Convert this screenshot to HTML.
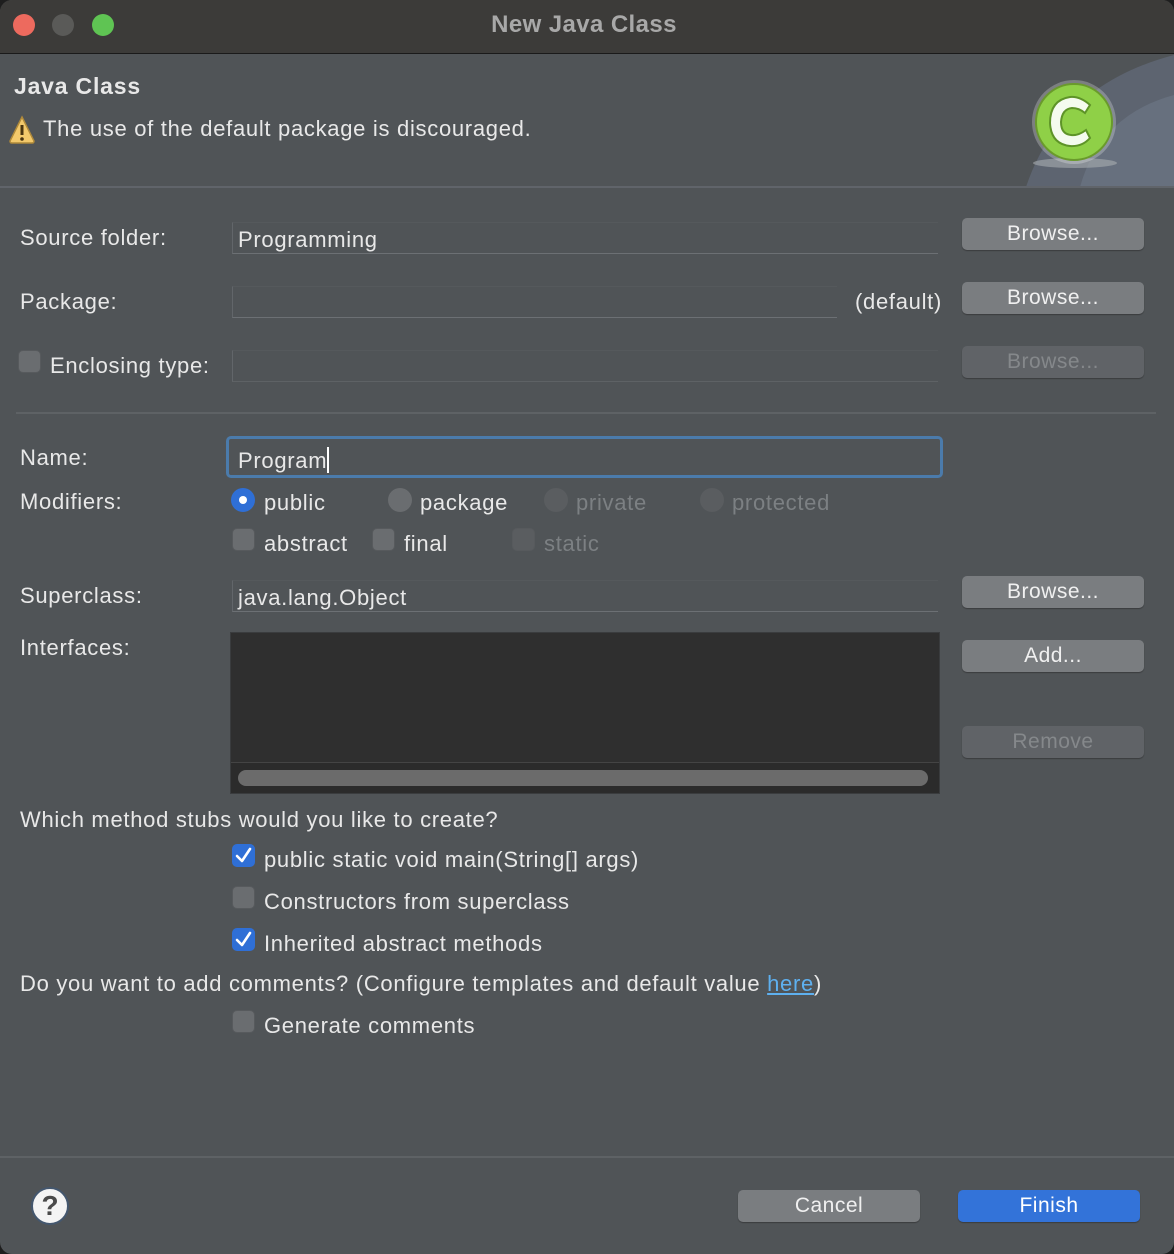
<!DOCTYPE html>
<html><head><meta charset="utf-8"><style>
*{margin:0;padding:0;box-sizing:border-box}
body{width:1174px;height:1254px;background:#1e1e1e;font-family:"Liberation Sans",sans-serif;overflow:hidden}
.win{position:absolute;left:0;top:0;width:1174px;height:1254px;background:#505457;border-radius:12px;overflow:hidden}
.tb{position:absolute;left:0;top:0;width:1174px;height:54px;background:#3c3b39;border-bottom:1px solid #1a1a1a}
.dot{position:absolute;top:14px;width:22px;height:22px;border-radius:50%}
.t{position:absolute;color:#e8e8e8;font-size:22px;letter-spacing:0.7px;white-space:nowrap;line-height:24px}
.dis{color:#7c8083}
.field{position:absolute;border-left:1px solid #62666a;border-bottom:1px solid #6c7074;border-top:1px solid #55595c}
.btn{position:absolute;height:32px;background:#7a7d80;border-radius:5px;color:#f0f0f0;font-size:21px;letter-spacing:0.5px;text-align:center;line-height:32px;box-shadow:0 1px 1px #3a3c3e}
.btn.d{background:#606367;color:#85888b}
.cb{position:absolute;width:23px;height:23px;border-radius:5px;background:#6a6d70;border:1px solid #575a5d}
.cb.d{background:#5a5d60}
.cb.on{background:#2f6fd6;border-color:#2f6fd6}
.rd{position:absolute;width:24px;height:24px;border-radius:50%;background:#6a6d70}
.rd.d{background:#5a5d60}
.hr{position:absolute;height:2px;background:#5e6265}
</style></head><body><div class="win">
<div class="tb">
<div class="dot" style="left:13px;background:#ed6a5e"></div>
<div class="dot" style="left:52px;background:#5a5a58"></div>
<div class="dot" style="left:92px;background:#5fc453"></div>
<div class="t" style="left:0;width:1168px;text-align:center;top:13px;font-weight:bold;color:#a8a8a8;font-size:24px;letter-spacing:0.4px">New Java Class</div>
</div>
<svg style="position:absolute;left:1020px;top:55px" width="154" height="132"><path d="M6 132 Q40 30 154 0 L154 132Z" fill="#5d6470"/><path d="M60 132 Q80 60 154 40 L154 132Z" fill="#67707e"/></svg>
<svg style="position:absolute;left:1028px;top:80px" width="94" height="90">
<ellipse cx="47" cy="83" rx="42" ry="5" fill="#a8adb0" opacity=".6"/>
<circle cx="46" cy="42" r="42" fill="#fff" opacity=".25"/>
<circle cx="46" cy="42" r="38" fill="#8fd047" stroke="#6a9a2c" stroke-width="2"/>
<path d="M62 25 Q52 16 42 17 Q22 20 22 43 Q23 64 42 66 Q54 67 62 58 L58 50 Q50 56 43 55 Q33 54 33 42 Q34 29 44 28 Q51 28 57 33Z" fill="#f4fbee" stroke="#5e9428" stroke-width="2"/>
</svg>
<div class="t" style="left:14px;top:74px;font-weight:bold;font-size:23px;letter-spacing:0.8px">Java Class</div>
<svg style="position:absolute;left:8px;top:115px" width="28" height="30"><path d="M14 2 L26 26 Q26 28 24 28 L4 28 Q2 28 2 26Z" fill="#f3c96b" stroke="#b08a3a" stroke-width="1.5"/><rect x="12.5" y="10" width="3" height="10" fill="#4a3510"/><circle cx="14" cy="24" r="1.8" fill="#4a3510"/></svg>
<div class="t" style="left:43px;top:117px">The use of the default package is discouraged.</div>
<div class="hr" style="left:0;top:186px;width:1174px;background:#60646a"></div>

<div class="t" style="left:20px;top:226px">Source folder:</div>
<div class="field" style="left:232px;top:222px;width:706px;height:32px"></div>
<div class="t" style="left:238px;top:228px">Programming</div>
<div class="btn" style="left:962px;top:218px;width:182px">Browse...</div>

<div class="t" style="left:20px;top:290px">Package:</div>
<div class="field" style="left:232px;top:286px;width:605px;height:32px"></div>
<div class="t" style="left:855px;top:290px">(default)</div>
<div class="btn" style="left:962px;top:282px;width:182px">Browse...</div>

<div class="cb" style="left:18px;top:350px"></div>
<div class="t" style="left:50px;top:354px">Enclosing type:</div>
<div class="field" style="left:232px;top:350px;width:706px;height:32px;border-bottom-color:#5e6265"></div>
<div class="btn d" style="left:962px;top:346px;width:182px">Browse...</div>

<div class="hr" style="left:16px;top:412px;width:1140px"></div>

<div class="t" style="left:20px;top:446px">Name:</div>
<div style="position:absolute;left:226px;top:436px;width:717px;height:42px;border:3px solid #4b7bab;border-radius:5px;background:#505457"></div>
<div class="t" style="left:238px;top:447px">Program<span style="display:inline-block;width:2px;height:26px;background:#fff;vertical-align:-5px"></span></div>

<div class="t" style="left:20px;top:490px">Modifiers:</div>
<div class="rd" style="left:231px;top:488px;background:#2f6fd6"><div style="position:absolute;left:8px;top:8px;width:8px;height:8px;border-radius:50%;background:#fff"></div></div>
<div class="t" style="left:264px;top:491px">public</div>
<div class="rd" style="left:388px;top:488px"></div>
<div class="t" style="left:420px;top:491px">package</div>
<div class="rd d" style="left:544px;top:488px"></div>
<div class="t dis" style="left:576px;top:491px">private</div>
<div class="rd d" style="left:700px;top:488px"></div>
<div class="t dis" style="left:732px;top:491px">protected</div>

<div class="cb" style="left:232px;top:528px"></div>
<div class="t" style="left:264px;top:532px">abstract</div>
<div class="cb" style="left:372px;top:528px"></div>
<div class="t" style="left:404px;top:532px">final</div>
<div class="cb d" style="left:512px;top:528px"></div>
<div class="t dis" style="left:544px;top:532px">static</div>

<div class="t" style="left:20px;top:584px">Superclass:</div>
<div class="field" style="left:232px;top:580px;width:706px;height:32px"></div>
<div class="t" style="left:238px;top:586px">java.lang.Object</div>
<div class="btn" style="left:962px;top:576px;width:182px">Browse...</div>

<div class="t" style="left:20px;top:636px">Interfaces:</div>
<div style="position:absolute;left:230px;top:632px;width:710px;height:162px;background:#2f2f2f;border:1px solid #3a3c3e"></div>
<div style="position:absolute;left:231px;top:762px;width:708px;height:31px;background:#2b2b2b;border-top:1px solid #444"></div>
<div style="position:absolute;left:238px;top:770px;width:690px;height:16px;border-radius:8px;background:#6b6b6b"></div>
<div class="btn" style="left:962px;top:640px;width:182px">Add...</div>
<div class="btn d" style="left:962px;top:726px;width:182px">Remove</div>

<div class="t" style="left:20px;top:808px">Which method stubs would you like to create?</div>
<div class="cb on" style="left:232px;top:844px"><svg width="21" height="21" style="position:absolute;left:0;top:0"><path d="M4 11 L9 16 L17 4" fill="none" stroke="#fff" stroke-width="2.6" stroke-linecap="round" stroke-linejoin="round"/></svg></div>
<div class="t" style="left:264px;top:848px">public static void main(String[] args)</div>
<div class="cb" style="left:232px;top:886px"></div>
<div class="t" style="left:264px;top:890px">Constructors from superclass</div>
<div class="cb on" style="left:232px;top:928px"><svg width="21" height="21" style="position:absolute;left:0;top:0"><path d="M4 11 L9 16 L17 4" fill="none" stroke="#fff" stroke-width="2.6" stroke-linecap="round" stroke-linejoin="round"/></svg></div>
<div class="t" style="left:264px;top:932px">Inherited abstract methods</div>

<div class="t" style="left:20px;top:972px">Do you want to add comments? (Configure templates and default value <span style="color:#5eb0ef;text-decoration:underline">here</span>)</div>
<div class="cb" style="left:232px;top:1010px"></div>
<div class="t" style="left:264px;top:1014px">Generate comments</div>

<div class="hr" style="left:0;top:1156px;width:1174px"></div>
<div style="position:absolute;left:31px;top:1187px;width:38px;height:38px;border-radius:50%;background:#f4f4f4;border:2px solid #44576e;color:#4a4a4a;font-weight:bold;font-size:28px;text-align:center;line-height:34px">?</div>
<div class="btn" style="left:738px;top:1190px;width:182px">Cancel</div>
<div class="btn" style="left:958px;top:1190px;width:182px;background:#3373d9;color:#fff">Finish</div>
</div></body></html>
